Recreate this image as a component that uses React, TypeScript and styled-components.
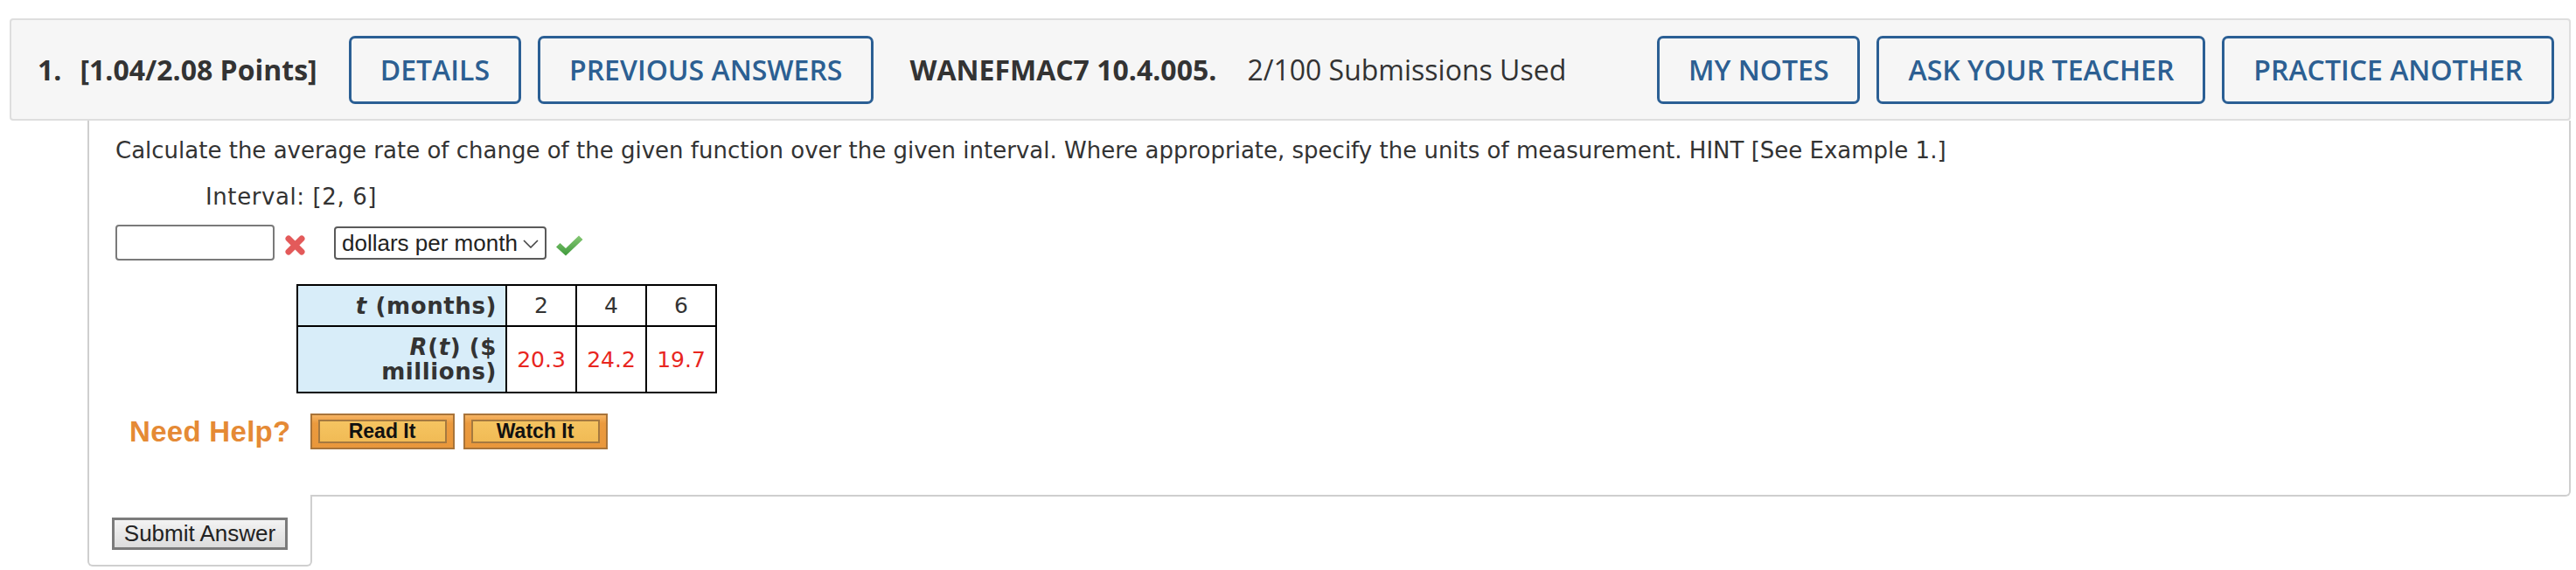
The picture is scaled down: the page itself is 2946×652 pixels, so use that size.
import React from "react";
import styled, { createGlobalStyle } from "styled-components";

const GlobalStyle = createGlobalStyle`
  html, body { margin: 0; padding: 0; background: #fff; }
  body { font-family: "Open Sans", sans-serif; }
`;

const Page = styled.div`
  padding: 21px 6px 0 11px;
`;

const Header = styled.div`
  display: flex;
  align-items: center;
  height: 113px;
  box-sizing: content-box;
  padding: 0 17px 0 30px;
  background: #f6f6f6;
  border: 2px solid #dedede;
  border-radius: 4px;
  font-family: "Open Sans", sans-serif;
  font-size: 32px;
  color: #333;
  white-space: nowrap;
`;

const Strong = styled.span<{ $gap?: number }>`
  font-weight: 700;
  margin-left: ${(p) => p.$gap ?? 0}px;
`;

const Plain = styled.span<{ $gap?: number }>`
  font-weight: 400;
  margin-left: ${(p) => p.$gap ?? 0}px;
`;

const ButtonGroup = styled.div<{ $gap?: number; $push?: boolean }>`
  display: flex;
  gap: 19px;
  margin-left: ${(p) => (p.$push ? "auto" : `${p.$gap ?? 0}px`)};
`;

const HeaderButton = styled.button`
  display: inline-flex;
  align-items: center;
  height: 78px;
  box-sizing: border-box;
  padding: 0 33px;
  border: 3px solid #2b5f94;
  border-radius: 7px;
  background: transparent;
  color: #2c5f92;
  font-family: "Open Sans", sans-serif;
  font-weight: 600;
  font-size: 32px;
  cursor: pointer;
`;

const Panel = styled.div`
  margin-left: 89px;
  border: 2px solid #cfcfcf;
  border-top: none;
  border-bottom-right-radius: 6px;
  padding: 16px 30px 52px 30px;
  font-family: "DejaVu Sans", Verdana, sans-serif;
  font-size: 26px;
  color: #333;
`;

const Prompt = styled.p`
  margin: 0;
  line-height: 36px;
`;

const Interval = styled.div`
  margin-top: 17px;
  padding-left: 103px;
  line-height: 36px;
  letter-spacing: 0.6px;
`;

const AnswerRow = styled.div`
  display: flex;
  align-items: center;
  height: 41px;
  margin-top: 14px;
`;

const AnswerInput = styled.input`
  width: 182px;
  height: 41px;
  box-sizing: border-box;
  border: 2px solid #7a7a7a;
  border-radius: 4px;
  background: #fff;
  margin: 0;
`;

const Mark = styled.svg<{ $gap: number }>`
  flex: none;
  margin-left: ${(p) => p.$gap}px;
  margin-top: 6px;
`;

const SelectWrap = styled.div`
  position: relative;
  margin-left: 32px;
  height: 38px;
`;

const UnitSelect = styled.select`
  appearance: none;
  -webkit-appearance: none;
  width: 243px;
  height: 38px;
  box-sizing: border-box;
  border: 2px solid #5a5a5a;
  border-radius: 4px;
  background: #fff;
  margin: 0;
  padding: 0 0 0 7px;
  font-family: "Liberation Sans", Arial, sans-serif;
  font-size: 26px;
  color: #222;
`;

const Chevron = styled.svg`
  position: absolute;
  right: 9px;
  top: 15px;
  pointer-events: none;
`;

const DataTable = styled.table`
  margin-top: 27px;
  margin-left: 207px;
  border-collapse: collapse;
  border: 2px solid #000;
`;

const HeadCell = styled.th<{ $h: number }>`
  width: 219px;
  height: ${(p) => p.$h}px;
  padding: 0 10px 0 8px;
  border: 2px solid #000;
  background: #d8edf9;
  text-align: right;
  font-weight: 700;
  font-size: 26px;
  letter-spacing: 0.6px;
  line-height: 28px;
  color: #333;
`;

const ValueCell = styled.td<{ $red?: boolean }>`
  width: 60px;
  padding: 0 9px;
  border: 2px solid #000;
  text-align: center;
  font-weight: 400;
  font-size: 25px;
  color: ${(p) => (p.$red ? "#e8261f" : "#333")};
`;

const HelpRow = styled.div`
  display: flex;
  align-items: center;
  margin-top: 23px;
  padding-left: 16px;
  height: 41px;
`;

const NeedHelp = styled.span`
  font-family: "Liberation Sans", Arial, sans-serif;
  font-weight: 700;
  font-size: 33px;
  color: #e58a35;
  margin-right: 22px;
  letter-spacing: 0.3px;
`;

const HelpButton = styled.button<{ $gap?: number }>`
  width: 165px;
  height: 41px;
  box-sizing: border-box;
  margin: 0 0 0 ${(p) => p.$gap ?? 0}px;
  padding: 5px 7px;
  border: 2px solid #a8743a;
  background: linear-gradient(#f6b463 0%, #eb9a3e 25%, #e9973b 100%);
  display: flex;
  cursor: pointer;
`;

const HelpInner = styled.span`
  flex: 1;
  display: flex;
  align-items: center;
  justify-content: center;
  border: 2px solid #a5793f;
  background: linear-gradient(#f5c461, #f1bb55);
  font-family: "Liberation Sans", Arial, sans-serif;
  font-weight: 700;
  font-size: 23px;
  color: #111;
`;

const SubmitTab = styled.div`
  margin-left: 89px;
  margin-top: -2px;
  width: 257px;
  box-sizing: border-box;
  border: 2px solid #cfcfcf;
  border-top: none;
  border-radius: 0 0 6px 6px;
  background: #fff;
  padding: 26px 26px 17px;
`;

const SubmitButton = styled.button`
  display: block;
  width: 201px;
  height: 37px;
  box-sizing: border-box;
  margin: 0;
  padding: 0;
  border: 3px solid #7b7b7b;
  background: linear-gradient(#f3f3f3, #dcdcdc);
  font-family: "Liberation Sans", Arial, sans-serif;
  font-size: 26px;
  color: #222;
`;

const Ital = styled.i`
  font-style: italic;
`;

export default function App() {
  return (
    <>
      <GlobalStyle />
      <Page>
        <Header>
          <Strong>1.</Strong>
          <Strong $gap={21}>[1.04/2.08 Points]</Strong>
          <ButtonGroup $gap={36}>
            <HeaderButton>DETAILS</HeaderButton>
            <HeaderButton>PREVIOUS ANSWERS</HeaderButton>
          </ButtonGroup>
          <Strong $gap={41}>WANEFMAC7 10.4.005.</Strong>
          <Plain $gap={35}>2/100 Submissions Used</Plain>
          <ButtonGroup $push>
            <HeaderButton>MY NOTES</HeaderButton>
            <HeaderButton>ASK YOUR TEACHER</HeaderButton>
            <HeaderButton>PRACTICE ANOTHER</HeaderButton>
          </ButtonGroup>
        </Header>

        <Panel>
          <Prompt>
            Calculate the average rate of change of the given function over the given interval. Where
            appropriate, specify the units of measurement. HINT [See Example 1.]
          </Prompt>
          <Interval>Interval: [2, 6]</Interval>
          <AnswerRow>
            <AnswerInput type="text" aria-label="answer" />
            <Mark $gap={11} width="25" height="25" viewBox="0 0 25 25">
              <path d="M5 5 L20 20 M20 5 L5 20" stroke="#e35a5a" strokeWidth="7" strokeLinecap="round" />
            </Mark>
            <SelectWrap>
              <UnitSelect defaultValue="dpm" aria-label="units">
                <option value="dpm">dollars per month</option>
              </UnitSelect>
              <Chevron width="18" height="10" viewBox="0 0 18 10">
                <path d="M1 1 L9 9 L17 1" fill="none" stroke="#444" strokeWidth="1.6" />
              </Chevron>
            </SelectWrap>
            <Mark $gap={10} width="32" height="25" viewBox="0 0 32 25">
              <defs>
                <linearGradient id="chk" x1="0" y1="0" x2="0" y2="1">
                  <stop offset="0" stopColor="#86c874" />
                  <stop offset="1" stopColor="#3f9a3c" />
                </linearGradient>
              </defs>
              <path d="M1 14.5 L5.5 10 L12 16 L27 1.5 L31.5 6 L12 24.5 Z" fill="url(#chk)" strokeLinejoin="round" />
            </Mark>
          </AnswerRow>

          <DataTable>
            <tbody>
              <tr>
                <HeadCell $h={45}>
                  <Ital>t</Ital> (months)
                </HeadCell>
                <ValueCell>2</ValueCell>
                <ValueCell>4</ValueCell>
                <ValueCell>6</ValueCell>
              </tr>
              <tr>
                <HeadCell $h={74}>
                  <Ital>R</Ital>(<Ital>t</Ital>) ($
                  <br />
                  millions)
                </HeadCell>
                <ValueCell $red>20.3</ValueCell>
                <ValueCell $red>24.2</ValueCell>
                <ValueCell $red>19.7</ValueCell>
              </tr>
            </tbody>
          </DataTable>

          <HelpRow>
            <NeedHelp>Need Help?</NeedHelp>
            <HelpButton>
              <HelpInner>Read It</HelpInner>
            </HelpButton>
            <HelpButton $gap={10}>
              <HelpInner>Watch It</HelpInner>
            </HelpButton>
          </HelpRow>
        </Panel>

        <SubmitTab>
          <SubmitButton>Submit Answer</SubmitButton>
        </SubmitTab>
      </Page>
    </>
  );
}
